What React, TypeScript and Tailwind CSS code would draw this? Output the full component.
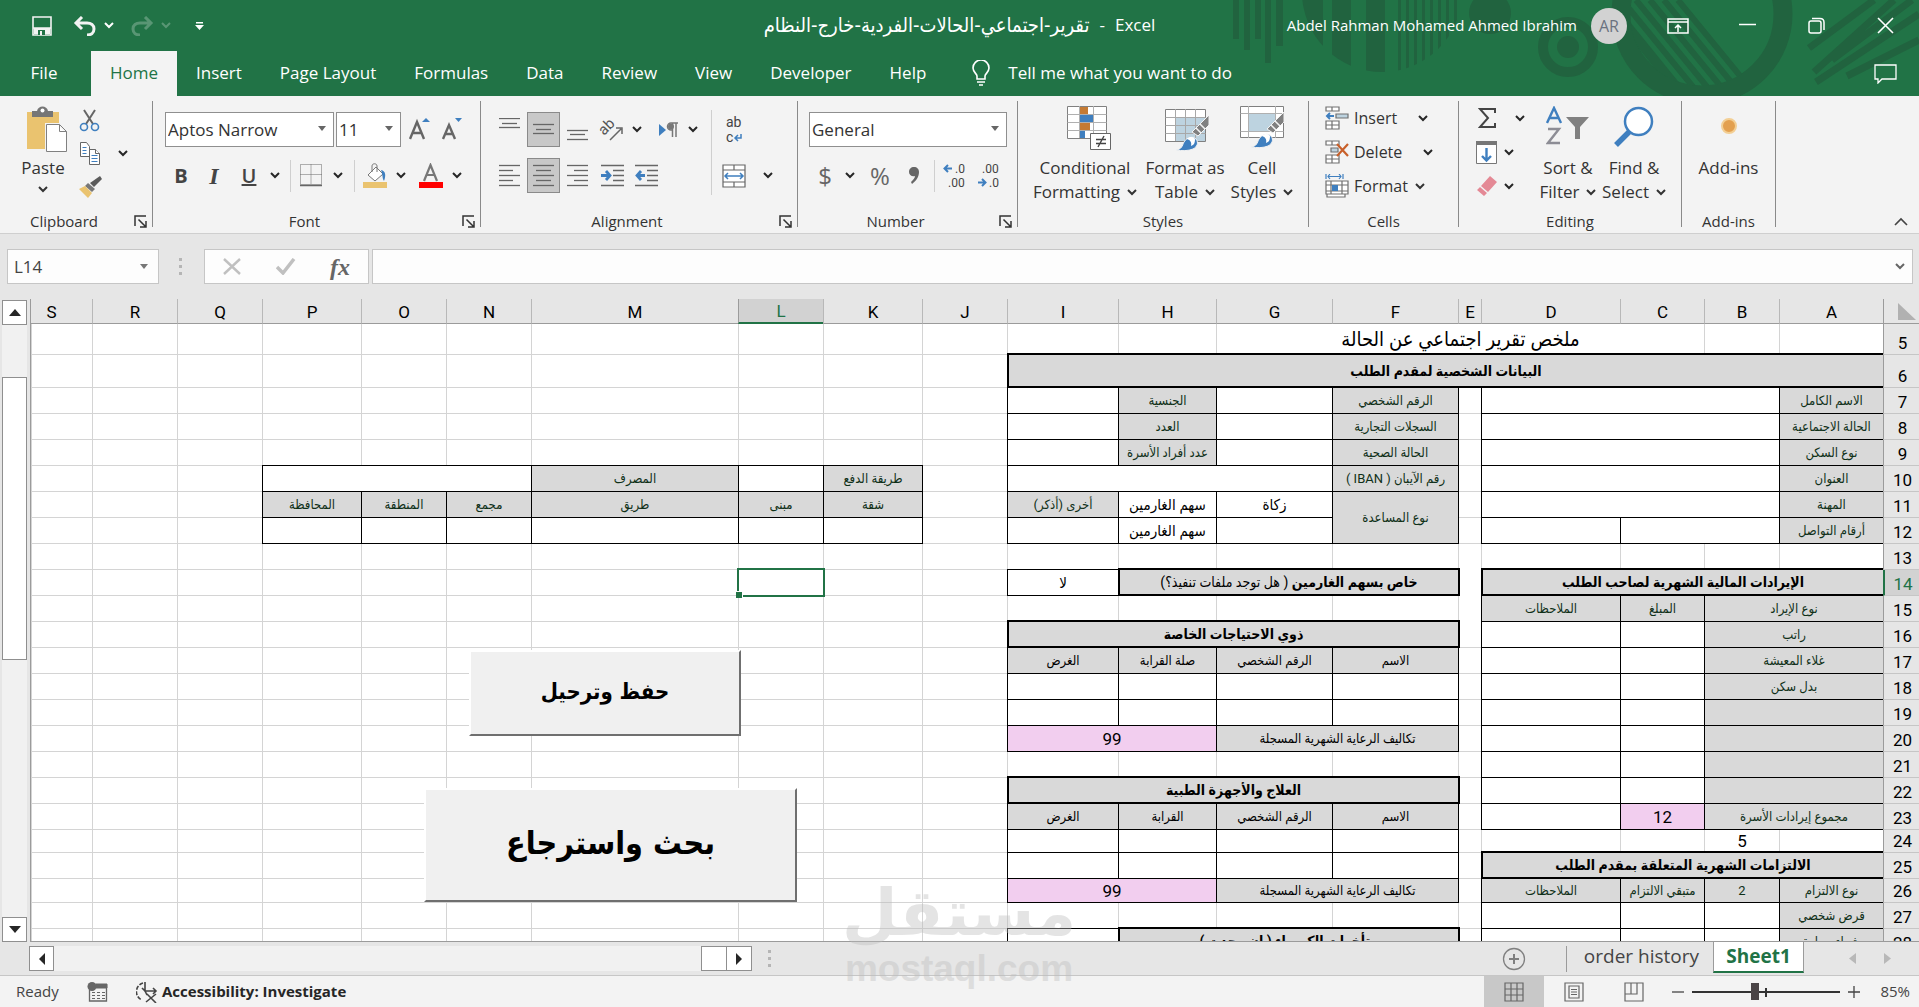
import { ReactNode } from "react";

type Kind = "grid" | "bare" | "box" | "label" | "head" | "title" | "pink" | "plain" | "caption" | "selected";

interface CellData {
    kind: Kind;
    text?: ReactNode;
    span?: number;
    rows?: number;
}

interface RowData {
    n: number;
    height: string;
    cells: CellData[];
}

const UI = "font-['Open_Sans','Noto_Sans',sans-serif]";

const BOX = "relative z-10 border-l border-b border-black shadow-[1px_0_0_#000,0_-1px_0_#000,1px_-1px_0_#000]";

const KINDS: Record<Kind, string> = {
    grid: "border-l border-b border-[#d4d4d4]",
    bare: "border-l border-[#d4d4d4]",
    plain: "border-l border-b border-[#d4d4d4] text-[17px]",
    caption: "border-l border-b border-[#d4d4d4] text-xl",
    box: BOX + " bg-white text-[15px]",
    label: BOX + " bg-[#d9d9d9] text-[#0f3018] text-[13px]",
    head: BOX + " bg-[#d9d9d9] text-black text-[13px]",
    pink: BOX + " bg-[#f2ceef] text-[17px]",
    title: "relative z-20 border-l-2 border-b-2 border-black bg-[#d9d9d9] text-sm font-bold shadow-[2px_0_0_#000,0_-2px_0_#000,2px_-2px_0_#000]",
    selected: "relative z-20 border-l border-b border-[#d4d4d4]",
};

const grid = (count: number): CellData[] => Array.from({ length: count }, () => ({ kind: "grid" as Kind }));
const boxes = (count: number): CellData[] => Array.from({ length: count }, () => ({ kind: "box" as Kind }));
const box = (text?: string, span?: number): CellData => ({ kind: "box", text, span });
const label = (text: string, span?: number, rows?: number): CellData => ({ kind: "label", text, span, rows });
const head = (text: string, span?: number): CellData => ({ kind: "head", text, span });
const title = (text: ReactNode, span: number): CellData => ({ kind: "title", text, span });
const pink = (text: string, span?: number): CellData => ({ kind: "pink", text, span });
const bare: CellData = { kind: "bare" };

const COLUMNS = [
    { name: "A", width: "w-[104px]" },
    { name: "B", width: "w-[75px]" },
    { name: "C", width: "w-[84px]" },
    { name: "D", width: "w-[139px]" },
    { name: "E", width: "w-[23px]" },
    { name: "F", width: "w-[126px]" },
    { name: "G", width: "w-[116px]" },
    { name: "H", width: "w-[98px]" },
    { name: "I", width: "w-[111px]" },
    { name: "J", width: "w-[85px]" },
    { name: "K", width: "w-[99px]" },
    { name: "L", width: "w-[85px]" },
    { name: "M", width: "w-[207px]" },
    { name: "N", width: "w-[85px]" },
    { name: "O", width: "w-[85px]" },
    { name: "P", width: "w-[99px]" },
    { name: "Q", width: "w-[85px]" },
    { name: "R", width: "w-[85px]" },
    { name: "S", width: "" },
];

const ROWS: RowData[] = [
    { n: 5, height: "h-[31px]", cells: [...grid(2), { kind: "caption", text: "ملخص تقرير اجتماعي عن الحالة", span: 5 }, ...grid(12)] },
    { n: 6, height: "h-[33px]", cells: [title("البيانات الشخصية لمقدم الطلب", 9), ...grid(10)] },
    { n: 7, height: "h-[26px]", cells: [label("الاسم الكامل"), box("", 3), ...grid(1), label("الرقم الشخصي"), box(), label("الجنسية"), box(), ...grid(10)] },
    { n: 8, height: "h-[26px]", cells: [label("الحالة الاجتماعية"), box("", 3), ...grid(1), label("السجلات التجارية"), box(), label("العدد"), box(), ...grid(10)] },
    { n: 9, height: "h-[26px]", cells: [label("نوع السكن"), box("", 3), ...grid(1), label("الحالة الصحية"), box(), label("عدد أفراد الأسرة"), box(), ...grid(10)] },
    { n: 10, height: "h-[26px]", cells: [label("العنوان"), box("", 3), ...grid(1), label("رقم الآيبان ( IBAN )"), box("", 3), ...grid(1), label("طريقة الدفع"), box(), label("المصرف"), box("", 3), ...grid(3)] },
    { n: 11, height: "h-[26px]", cells: [label("المهنة"), box("", 3), ...grid(1), label("نوع المساعدة", 1, 2), box("زكاة"), box("سهم الغارمين"), label("أخرى (أذكر)"), ...grid(1), label("شقة"), label("مبنى"), label("طريق"), label("مجمع"), label("المنطقة"), label("المحافظة"), ...grid(3)] },
    { n: 12, height: "h-[26px]", cells: [label("أرقام التواصل"), box("", 2), box(), ...grid(1), box(), box("سهم الغارمين"), box(), ...grid(1), ...boxes(6), ...grid(3)] },
    { n: 13, height: "h-[26px]", cells: [...grid(4), bare, ...grid(14)] },
    { n: 14, height: "h-[26px]", cells: [title("الإيرادات المالية الشهرية لصاحب الطلب", 4), bare, title(<>خاص بسهم الغارمين <span className="font-normal">( هل توجد ملفات تنفيذ؟)</span></>, 3), box("لا"), ...grid(2), { kind: "selected" }, ...grid(7)] },
    { n: 15, height: "h-[26px]", cells: [label("نوع الإيراد", 2), label("المبلغ"), label("الملاحظات"), bare, ...grid(14)] },
    { n: 16, height: "h-[26px]", cells: [label("راتب", 2), ...boxes(2), ...grid(1), title("ذوي الاحتياجات الخاصة", 4), ...grid(10)] },
    { n: 17, height: "h-[26px]", cells: [label("غلاء المعيشة", 2), ...boxes(2), ...grid(1), head("الاسم"), head("الرقم الشخصي"), head("صلة القرابة"), head("الغرض"), ...grid(10)] },
    { n: 18, height: "h-[26px]", cells: [label("بدل سكن", 2), ...boxes(2), ...grid(1), ...boxes(4), ...grid(10)] },
    { n: 19, height: "h-[26px]", cells: [label("", 2), ...boxes(2), ...grid(1), ...boxes(4), ...grid(10)] },
    { n: 20, height: "h-[26px]", cells: [label("", 2), ...boxes(2), ...grid(1), head("تكاليف الرعاية الشهرية المسجلة", 2), pink("99", 2), ...grid(10)] },
    { n: 21, height: "h-[26px]", cells: [label("", 2), ...boxes(2), ...grid(15)] },
    { n: 22, height: "h-[26px]", cells: [label("", 2), ...boxes(2), ...grid(1), title("العلاج والأجهزة الطبية", 4), ...grid(10)] },
    { n: 23, height: "h-[26px]", cells: [label("مجموع إيرادات الأسرة", 2), pink("12"), box(), ...grid(1), head("الاسم"), head("الرقم الشخصي"), head("القرابة"), head("الغرض"), ...grid(10)] },
    { n: 24, height: "h-[23px]", cells: [...grid(1), { kind: "plain", text: "5" }, ...grid(3), ...boxes(4), ...grid(10)] },
    { n: 25, height: "h-[26px]", cells: [title("الالتزامات الشهرية المتعلقة بمقدم الطلب", 4), ...grid(1), ...boxes(4), ...grid(10)] },
    { n: 26, height: "h-[24px]", cells: [label("نوع الالتزام"), label("2"), label("متبقي الالتزام"), label("الملاحظات"), ...grid(1), head("تكاليف الرعاية الشهرية المسجلة", 2), pink("99", 2), ...grid(10)] },
    { n: 27, height: "h-[26px]", cells: [label("قرض شخصي"), ...boxes(3), ...grid(15)] },
    { n: 28, height: "h-[26px]", cells: [label("شراء سيارة"), ...boxes(3), ...grid(1), title("متأخرات الكهرباء ( إن وجدت )", 3), box(), ...grid(10)] },
];

const TABS = ["Insert", "Page Layout", "Formulas", "Data", "Review", "View", "Developer", "Help"];

const Chevron = ({ className = "" }: { className?: string }) => (
    <svg width="10" height="7" viewBox="0 0 10 7" className={"shrink-0 " + className} fill="none" stroke="currentColor" strokeWidth="2">
        <path d="M1 1l4 4 4-4" />
    </svg>
);

const DropButton = ({ name, className = "" }: { name: string; className?: string }) => (
    <button aria-label={name} className={"flex h-6 w-4 shrink-0 items-center justify-center text-[#262626] " + className}>
        <Chevron />
    </button>
);

const IconButton = ({ name, className = "", children }: { name: string; className?: string; children: ReactNode }) => (
    <button aria-label={name} title={name} className={"flex h-[35px] shrink-0 items-center justify-center " + className}>
        {children}
    </button>
);

const Divider = ({ className = "h-8" }: { className?: string }) => (
    <div className={"w-px shrink-0 " + className} />
);

interface GroupProps {
    name: string;
    className: string;
    launcher?: boolean;
    children: ReactNode;
}

const Group = ({ name, className, launcher, children }: GroupProps) => (
    <section aria-label={name} className={"flex shrink-0 flex-col border-r border-[#8a8a8a] " + className}>
        <div className="min-h-0 flex-1">{children}</div>
        <div className="relative flex h-3 items-center justify-center text-[15px] leading-3 text-[#333]">
            <span className={launcher ? "pr-6" : ""}>{name}</span>
            {launcher && (
                <button aria-label={name + " settings"} className="absolute right-[5px] top-0">
                    <svg width="13" height="13" viewBox="0 0 13 13" fill="none" stroke="#333" strokeWidth="1.5">
                        <path d="M1 11V1h11M4.5 4.5l7 7M12 6v6H6" />
                    </svg>
                </button>
            )}
        </div>
    </section>
);

const Combo = ({ name, value, className }: { name: string; value: string; className: string }) => (
    <div className={"relative h-[35px] shrink-0 " + className}>
        <select aria-label={name} className="h-full w-full appearance-none border border-[#8f8f8f] bg-white pl-[2px] text-[17px] text-[#333]">
            <option>{value}</option>
        </select>
        <svg width="8" height="5" viewBox="0 0 8 5" className="pointer-events-none absolute right-2 top-[14px]" fill="#666">
            <path d="M0 0h8L4 5z" />
        </svg>
    </div>
);

const Lines = ({ rows }: { rows: [number, number, number][] }) => (
    <svg width="21" height="24" viewBox="0 0 21 24" stroke="#666" strokeWidth="1.3">
        {rows.map(([x1, x2, y]) => <path key={y} d={`M${x1} ${y}.5H${x2}`} />)}
    </svg>
);

const BigButton = ({ icon, lines, drop, className = "" }: { icon: ReactNode; lines: string[]; drop?: boolean; className?: string }) => (
    <button className={"flex shrink-0 flex-col items-center pt-[5px] text-[17px] leading-6 text-[#333] " + className}>
        <span className="flex h-[50px] items-start justify-center">{icon}</span>
        <span className="whitespace-nowrap">{lines[0]}</span>
        {lines[1] && (
            <span className="flex items-center gap-[7px]">
                {lines[1]}
                {drop && <Chevron />}
            </span>
        )}
    </button>
);

const Brush = () => (
    <>
        <path d="M44 6v10L33 27l-6-4z" fill="#808080" stroke="#f3f3f3" />
        <path d="M35 15l5 5M31 19l5 5" stroke="#f3f3f3" strokeWidth="1.5" />
        <path d="M11 41c6-1 6-4 8-8 3-5 9-6 12-3 3 4 1 8-3 10-5 2-11 2-17 1z" fill="#3f7fbf" stroke="#f3f3f3" />
        <path d="M22 30c3-3 7-2 8 0 0 4-1 6-4 7 1-4-1-6-4-7z" fill="#fff" />
    </>
);

const CellsIcon = ({ children }: { children: ReactNode }) => (
    <svg width="24" height="24" viewBox="0 0 24 24" fill="none" stroke="#707070" strokeWidth="1.2">{children}</svg>
);

const Doodles = () => (
    <svg className="pointer-events-none absolute right-0 top-0" width="700" height="96" viewBox="1219 0 700 96" fill="#21633f">
        <defs>
            <clipPath id="stripes"><circle cx="1382" cy="-8" r="80" /></clipPath>
            <clipPath id="ring"><circle cx="1702" cy="14" r="72" /></clipPath>
        </defs>
        <path d="M1233 0h6v39h-6zM1244 0h6v50h-6zM1255 0h6v39h-6zM1265 0h6v63h-6zM1276 0h7v46h-7z" />
        <g clipPath="url(#stripes)">
            <path d="M1302 0h21v72h-21zM1332 0h19v72h-19zM1366 0h19v72h-19zM1398 0h3v72h-3zM1406 0h3v72h-3zM1414 0h3v72h-3zM1422 0h3v72h-3zM1430 0h3v72h-3zM1438 0h3v72h-3zM1446 0h3v72h-3zM1454 0h3v72h-3z" />
        </g>
        <circle cx="1490" cy="13" r="21" />
        <circle cx="1568" cy="47" r="25" fill="none" stroke="#21633f" strokeWidth="10" />
        <circle cx="1568" cy="47" r="11" />
        <circle cx="1702" cy="14" r="81" fill="none" stroke="#21633f" strokeWidth="19" />
        <g clipPath="url(#ring)" fill="none" stroke="#21633f" strokeWidth="6">
            <path d="M1622 0l90 110M1636 0l90 110M1650 0l90 110M1664 0l90 110M1678 0l90 110" />
            <path d="M1622 20l60 74" strokeWidth="10" />
        </g>
        <path d="M1874 0l-65 48M1894 0l-80 72M1912 0l-80 60M1919 14l-103 68M1919 40l-72 36" fill="none" stroke="#21633f" strokeWidth="7" />
    </svg>
);

const TitleBar = () => (
    <div className="relative flex h-[51px] items-center text-white">
        <button aria-label="Save" className="ml-8">
            <svg width="20" height="20" viewBox="0 0 20 20" fill="none" stroke="#f3f3f3" strokeWidth="1.6">
                <path d="M1 1h18v18H1zM1 12h18" />
                <path d="M2 12h16v6H2z" fill="#f3f3f3" stroke="none" />
                <path d="M6 14h7v5H6z" fill="#217346" stroke="none" />
                <path d="M8 15h2v4H8z" fill="#f3f3f3" stroke="none" />
            </svg>
        </button>
        <button aria-label="Undo" className="ml-[21px]">
            <svg width="24" height="20" viewBox="0 0 24 20" fill="none" stroke="#f3f3f3" strokeWidth="3">
                <path d="M9 1L3 7l6 6M3 7h11c4 0 7 2 7 6s-3 6-7 6" />
            </svg>
        </button>
        <button aria-label="Undo history" className="ml-[7px]"><Chevron /></button>
        <button aria-label="Redo" className="ml-4 opacity-25">
            <svg width="24" height="20" viewBox="0 0 24 20" fill="none" stroke="#fff" strokeWidth="3">
                <path d="M15 1l6 6-6 6M21 7H10c-4 0-7 2-7 6s3 6 7 6" />
            </svg>
        </button>
        <button aria-label="Redo history" className="ml-[7px] opacity-25"><Chevron /></button>
        <button aria-label="Customize Quick Access Toolbar" className="ml-6">
            <svg width="9" height="8" viewBox="0 0 9 8" fill="#fff"><path d="M1 0h7v1.5H1zM0 3h9L4.5 8z" /></svg>
        </button>
        <h1 className="absolute inset-x-0 top-[13px] flex justify-center gap-[10px] text-[17px] leading-6">
            <span dir="rtl" className="font-['DejaVu_Sans_Condensed','DejaVu_Sans',sans-serif] text-xl leading-6">تقرير-اجتماعي-الحالات-الفردية-خارج-النظام</span>
            <span>-</span>
            <span>Excel</span>
        </h1>
        <div className="relative ml-auto flex items-center">
            <span className="mr-[14px] text-[15px]">Abdel Rahman Mohamed Ahmed Ibrahim</span>
            <button className="mr-10 flex size-9 items-center justify-center rounded-full bg-[#d2d2d2] text-base text-[#6b7280]">AR</button>
            <button aria-label="Ribbon display options" className="mr-[50px]">
                <svg width="22" height="16" viewBox="0 0 22 16" fill="none" stroke="#fff" strokeWidth="1.5"><path d="M1 1h20v14H1zM1 4h20M11 14V7M8 10l3-3 3 3" /></svg>
            </button>
            <button aria-label="Minimize" className="mr-[52px]">
                <svg width="17" height="16" viewBox="0 0 17 16" stroke="#fff" strokeWidth="1.5"><path d="M0 6.5h17" /></svg>
            </button>
            <button aria-label="Restore" className="mr-[52px]">
                <svg width="17" height="17" viewBox="0 0 17 17" fill="none" stroke="#fff" strokeWidth="1.5"><rect x="1" y="4" width="12" height="12" rx="2" /><path d="M4 1.5h8c2 0 4 1 4 4V13" /></svg>
            </button>
            <button aria-label="Close" className="mr-[25px]">
                <svg width="17" height="17" viewBox="0 0 17 17" stroke="#fff" strokeWidth="1.6"><path d="M1 1l15 15M16 1L1 16" /></svg>
            </button>
        </div>
    </div>
);

const TabBar = () => (
    <nav className="relative flex h-[45px] items-stretch text-[17px] text-white">
        <button className="w-[91px] pb-[2px] pr-[3px]">File</button>
        <button className="w-[86px] bg-[#f3f3f3] pb-[2px] text-[#217346]">Home</button>
        {TABS.map(tab => <button key={tab} className="whitespace-nowrap px-[19px] pb-[2px]">{tab}</button>)}
        <button className="ml-[27px] flex items-center gap-[18px] whitespace-nowrap pb-[2px]">
            <svg width="18" height="26" viewBox="0 0 18 26" fill="none" stroke="#fff" strokeWidth="1.6">
                <path d="M5 19v-3c0-2-4-4-4-8a8 8 0 0116 0c0 4-4 6-4 8v3zM5 22h8M7 25h4" />
            </svg>
            Tell me what you want to do
        </button>
        <button aria-label="Comments" className="ml-auto mr-[22px]">
            <svg width="23" height="20" viewBox="0 0 23 20" fill="none" stroke="#fff" strokeWidth="1.3"><path d="M1 1h21v14H8l-4 4v-4H1z" /></svg>
        </button>
    </nav>
);

const ClipboardGroup = () => (
    <Group name="Clipboard" className="w-[153px]" launcher>
        <div className="flex">
            <button className="ml-[18px] flex w-[50px] flex-col items-center text-[17px] leading-6 text-[#333]">
                <svg width="42" height="46" viewBox="0 0 42 46" className="ml-2 mt-[5px] shrink-0">
                    <path d="M1 6h32v37H1z" fill="#eac36f" />
                    <path d="M6 5h5c1-6 10-6 11 0h5v6H6z" fill="#767676" />
                    <circle cx="16.5" cy="4.5" r="2" fill="#fff" />
                    <path d="M20.5 18.5h13l7 7v20h-20z" fill="#fff" stroke="#f3f3f3" strokeWidth="3" />
                    <path d="M20.5 18.5h13l7 7v20h-20zM33.5 18.5v7h7" fill="#fff" stroke="#808080" />
                </svg>
                <span className="mt-1">Paste</span>
                <Chevron className="mt-[6px]" />
            </button>
            <div className="flex flex-col pl-[11px]">
                <button aria-label="Cut" className="h-9 pt-[2px]">
                    <svg width="22" height="23" viewBox="0 0 22 23" fill="none" strokeWidth="2">
                        <path d="M5 1l9 14M16 1L7 15" stroke="#666" />
                        <circle cx="5" cy="18" r="3.5" stroke="#3f7fbf" strokeWidth="1.6" />
                        <circle cx="16" cy="18" r="3.5" stroke="#3f7fbf" strokeWidth="1.6" />
                    </svg>
                </button>
                <div className="flex h-8 items-center">
                    <button aria-label="Copy">
                        <svg width="22" height="23" viewBox="0 0 22 23" fill="#fff" stroke="#666">
                            <path d="M1.5.5h6l3 4v10h-9z" />
                            <path d="M3.5 5.5h4M3.5 8.5h4M3.5 11.5h4" stroke="#3f7fbf" />
                            <path d="M10.5 7.5h6l4 4v11h-10z" />
                            <path d="M16.5 7.5v4h4" />
                            <path d="M12.5 13.5h6M12.5 16.5h6M12.5 19.5h6" stroke="#3f7fbf" />
                        </svg>
                    </button>
                    <DropButton name="Copy options" className="ml-[14px]" />
                </div>
                <button aria-label="Format Painter" className="h-8 pt-1">
                    <svg width="24" height="22" viewBox="0 0 24 22">
                        <path d="M21 0l2 3-8 8-4-4z" fill="#5b5b5b" />
                        <path d="M9 7l7 6-3 3-7-6z" fill="#777" />
                        <path d="M6 10l7 7-4 5-9-9z" fill="#eac36f" />
                    </svg>
                </button>
            </div>
        </div>
    </Group>
);

const FontGroup = () => (
    <Group name="Font" className="w-[328px]" launcher>
        <div className="flex items-center gap-[2px] pl-3 pt-[11px]">
            <Combo name="Font" value="Aptos Narrow" className="w-[169px]" />
            <Combo name="Font size" value="11" className="w-[65px]" />
            <IconButton name="Increase font size" className="ml-[5px] w-6">
                <svg width="22" height="26" viewBox="0 0 22 26"><path d="M1 22L8 5l7 17M3.5 16h9" fill="none" stroke="#666" strokeWidth="2.4" /><path d="M13 5l4-4 4 4z" fill="#3f7fbf" /></svg>
            </IconButton>
            <IconButton name="Decrease font size" className="ml-[6px] w-6">
                <svg width="22" height="26" viewBox="0 0 22 26"><path d="M2 22L8 8l6 14M4 17h8" fill="none" stroke="#666" strokeWidth="2.4" /><path d="M14 1h7l-3.5 4z" fill="#3f7fbf" /></svg>
            </IconButton>
        </div>
        <div className="flex items-center pl-3 pt-[11px] text-xl text-[#444]">
            <IconButton name="Bold" className="w-8 font-bold">B</IconButton>
            <IconButton name="Italic" className="w-[34px] font-['Liberation_Serif',serif] text-2xl font-bold italic">I</IconButton>
            <IconButton name="Underline" className="w-9 font-semibold underline">U</IconButton>
            <DropButton name="Underline style" />
            <Divider className="ml-[7px] h-8 bg-[#cfcfcf]" />
            <IconButton name="Borders" className="ml-2 w-[24px]">
                <svg width="22" height="23" viewBox="0 0 22 23" fill="none" stroke="#666"><path d="M.5.5h21v20H.5zM11 .5v20M.5 10.5h21" strokeDasharray="1 1" /><path d="M0 21.5h22" strokeWidth="1.5" /></svg>
            </IconButton>
            <DropButton name="Border style" className="ml-[7px]" />
            <Divider className="ml-2 h-8 bg-[#cfcfcf]" />
            <IconButton name="Fill Color" className="ml-2 w-6">
                <svg width="24" height="26" viewBox="0 0 24 26"><path d="M0 19h24v6H0z" fill="#eac36f" /><path d="M5 12L13 4l7 7-8 7z" fill="#fff" stroke="#777" /><path d="M9 9V3c0-3 5-3 5 0v6" fill="none" stroke="#777" /><path d="M18 7c5 1 5 6 3 11-2-3-1-6-3-11z" fill="#3f7fbf" /></svg>
            </IconButton>
            <DropButton name="Fill options" className="ml-[6px]" />
            <IconButton name="Font Color" className="ml-[10px] w-6">
                <svg width="24" height="26" viewBox="0 0 24 26"><path d="M0 19h24v6H0z" fill="#f00" /><path d="M5 18l6.5-16L18 18M7.5 12h8" fill="none" stroke="#777" strokeWidth="2.2" /></svg>
            </IconButton>
            <DropButton name="Font color options" className="ml-[6px]" />
        </div>
    </Group>
);

const AlignmentGroup = () => (
    <Group name="Alignment" className="w-[317px]" launcher>
        <div className="flex">
            <div>
                <div className="flex items-center pl-[17px] pt-[11px]">
                    <IconButton name="Top Align" className="w-[23px]"><Lines rows={[[0, 21, 0], [3, 18, 5], [0, 21, 9]]} /></IconButton>
                    <IconButton name="Middle Align" className="ml-[6px] w-[33px] border border-[#8a8a8a] bg-[#c8c8c8]"><Lines rows={[[0, 21, 6], [3, 18, 11], [0, 21, 15]]} /></IconButton>
                    <IconButton name="Bottom Align" className="ml-[6px] w-[23px]"><Lines rows={[[0, 21, 12], [3, 18, 16], [0, 21, 21]]} /></IconButton>
                    <IconButton name="Orientation" className="ml-3 w-6">
                        <svg width="24" height="24" viewBox="0 0 24 24" className="overflow-visible" fill="none" stroke="#666" strokeWidth="1.5">
                            <path d="M9 22L20 11M15 10h6v6" />
                            <text x="3" y="18" transform="rotate(-45 3 18)" fontSize="15" fill="#555" stroke="none" className="font-['Roboto',sans-serif]">ab</text>
                        </svg>
                    </IconButton>
                    <DropButton name="Orientation options" className="ml-1" />
                    <IconButton name="Text Direction" className="ml-3 w-6">
                        <svg width="20" height="16" viewBox="0 0 20 16"><path d="M0 2l7 6-7 6z" fill="#3f7fbf" /><path d="M19 1h-7a3.5 3.5 0 000 7h1M13.5 1v14M17 1v14" fill="none" stroke="#777" strokeWidth="1.5" /><circle cx="12" cy="4.5" r="3" fill="#777" /></svg>
                    </IconButton>
                    <DropButton name="Text direction options" className="ml-1" />
                </div>
                <div className="flex items-center pl-[17px] pt-[11px]">
                    <IconButton name="Align Left" className="w-[23px]"><Lines rows={[[0, 21, 1], [0, 14, 6], [0, 21, 11], [0, 14, 16], [0, 21, 21]]} /></IconButton>
                    <IconButton name="Center" className="ml-[6px] w-[33px] border border-[#8a8a8a] bg-[#c8c8c8]"><Lines rows={[[0, 21, 1], [3, 18, 6], [0, 21, 11], [3, 18, 16], [0, 21, 21]]} /></IconButton>
                    <IconButton name="Align Right" className="ml-[6px] w-[23px]"><Lines rows={[[0, 21, 1], [7, 21, 6], [0, 21, 11], [7, 21, 16], [0, 21, 21]]} /></IconButton>
                    <IconButton name="Decrease Indent" className="ml-[11px] w-6">
                        <svg width="23" height="24" viewBox="0 0 23 24" fill="none" stroke="#666" strokeWidth="1.3"><path d="M0 1.5h23M12 6.5h11M12 11.5h11M12 16.5h11M0 21.5h23" /><path d="M0 11.5h8M5 7l4 4.5L5 16" stroke="#3f7fbf" strokeWidth="2.8" /></svg>
                    </IconButton>
                    <IconButton name="Increase Indent" className="ml-[10px] w-6">
                        <svg width="23" height="24" viewBox="0 0 23 24" fill="none" stroke="#666" strokeWidth="1.3"><path d="M0 1.5h23M12 6.5h11M12 11.5h11M12 16.5h11M0 21.5h23" /><path d="M2 11.5h8M6 7l-4 4.5L6 16" stroke="#3f7fbf" strokeWidth="2.8" /></svg>
                    </IconButton>
                </div>
            </div>
            <Divider className="ml-auto mt-[9px] h-[85px] bg-[#cfcfcf]" />
            <div className="w-[85px] pl-[10px] pt-[11px]">
                <IconButton name="Wrap Text" className="w-6">
                    <svg width="20" height="32" viewBox="0 0 20 32" fontSize="14" fill="#444" className="overflow-visible font-['Roboto',sans-serif]"><text x="2" y="13">ab</text><text x="2" y="28">c</text><path d="M17 20v4h-6M14 21l-3 3 3 3" fill="none" stroke="#3f7fbf" strokeWidth="1.5" /></svg>
                </IconButton>
                <div className="flex items-center pt-[11px]">
                    <IconButton name="Merge and Center" className="w-6">
                        <svg width="24" height="24" viewBox="0 0 24 24" fill="#fff" stroke="#666" strokeWidth="1.2"><path d="M1 1h22v22H1zM1 6h22M1 18h22M12 1v5M12 18v5" /><path d="M3 12h18M6 9l-3 3 3 3M18 9l3 3-3 3" fill="none" stroke="#3f7fbf" strokeWidth="1.5" /></svg>
                    </IconButton>
                    <DropButton name="Merge options" className="ml-[14px]" />
                </div>
            </div>
        </div>
    </Group>
);

const NumberGroup = () => (
    <Group name="Number" className="w-[220px]" launcher>
        <div className="pl-[11px] pt-[11px]">
            <Combo name="Number format" value="General" className="w-[198px]" />
        </div>
        <div className="flex items-center pl-[18px] pt-[11px] text-2xl text-[#666]">
            <IconButton name="Accounting format" className="w-[18px]">$</IconButton>
            <DropButton name="Currency" className="ml-2" />
            <IconButton name="Percent" className="ml-[10px] w-6 text-2xl">%</IconButton>
            <IconButton name="Comma" className="ml-[10px] w-6">
                <svg width="10" height="17" viewBox="0 0 10 17" fill="#666"><path d="M5 0c3 0 5 2 5 5 0 5-3 9-7 12l-1-2c2-2 4-4 4-6C3 10 0 8 0 5s2-5 5-5z" /></svg>
            </IconButton>
            <Divider className="ml-2 h-8 bg-[#cfcfcf]" />
            <IconButton name="Increase Decimal" className="ml-2 w-6">
                <svg width="24" height="28" viewBox="0 0 24 28" fontSize="12" fill="#444" className="overflow-visible font-['Roboto',sans-serif]"><text x="12" y="11">.0</text><text x="5" y="25">.00</text><path d="M9 6.5H2M5 3L1.500 6.5 5 10" fill="none" stroke="#3f7fbf" strokeWidth="2" /></svg>
            </IconButton>
            <IconButton name="Decrease Decimal" className="ml-[10px] w-6">
                <svg width="24" height="28" viewBox="0 0 24 28" fontSize="12" fill="#444" className="overflow-visible font-['Roboto',sans-serif]"><text x="5" y="11">.00</text><text x="12" y="25">.0</text><path d="M1 20.5h7M5 17l3.5 3.5L5 24" fill="none" stroke="#3f7fbf" strokeWidth="2" /></svg>
            </IconButton>
        </div>
    </Group>
);

const StylesGroup = () => (
    <Group name="Styles" className="w-[291px]">
        <div className="flex">
            <BigButton
                className="ml-[11px] w-[112px]"
                lines={["Conditional", "Formatting"]}
                drop
                icon={
                    <svg width="44" height="46" viewBox="0 0 44 46" className="ml-2">
                        <path d="M.5.5h39v32H.5z" fill="#fff" stroke="#808080" />
                        <path d="M.5 8.5h39M.5 16.5h39M.5 24.5h39M12.5 0v32M26.5 0v32" stroke="#b0b0b0" />
                        <path d="M13 1h8v7h-8zM13 17h10v7H13z" fill="#c47a33" />
                        <path d="M13 9h13v7H13zM13 25h5v7h-5z" fill="#3f7fbf" />
                        <path d="M23.5 27.5h20v16h-20z" fill="#fff" stroke="#666" />
                        <path d="M29 33.5h10M29 37.5h10M37 30l-6 11" stroke="#444" strokeWidth="1.4" />
                    </svg>
                }
            />
            <BigButton
                className="w-[88px]"
                lines={["Format as", "Table"]}
                drop
                icon={
                    <svg width="44" height="46" viewBox="0 0 44 46" className="ml-1 mt-[3px]">
                        <path d="M.5.5h40v32H.5z" fill="#fff" stroke="#808080" />
                        <path d="M10 8h30v24H10z" fill="#bdd3e0" />
                        <path d="M.5 8.5h40M.5 16.5h40M.5 24.5h40M10.5 0v32M20.5 0v32M30.5 0v32" stroke="#a8a8a8" />
                        <Brush />
                    </svg>
                }
            />
            <BigButton
                className="w-[66px]"
                lines={["Cell", "Styles"]}
                drop
                icon={
                    <svg width="44" height="46" viewBox="0 0 44 46">
                        <path d="M.5.5h43v31H.5z" fill="#fff" stroke="#808080" />
                        <path d="M.5 7.5h43M.5 25.5h43M8.5 0v32M35.5 0v32" stroke="#b0b0b0" />
                        <path d="M9 8h26v17H9z" fill="#bdd3e0" />
                        <Brush />
                    </svg>
                }
            />
        </div>
    </Group>
);

const CellsGroup = () => (
    <Group name="Cells" className="w-[150px]">
        <div className="flex flex-col text-base text-[#333]">
            <div className="flex h-[34px] items-center pl-4">
                <button className="flex items-center gap-[5px]">
                    <CellsIcon>
                        <path d="M1 1h13v4H1zM7 1v4M1 15h13v8H1zM1 19h13M7 15v8" fill="#fff" />
                        <path d="M11 8h12v4H11z" fill="#bdd3e0" />
                        <path d="M9 10H2M5 7l-3 3 3 3" stroke="#3f7fbf" strokeWidth="2" />
                    </CellsIcon>
                    Insert
                </button>
                <DropButton name="Insert options" className="ml-[18px]" />
            </div>
            <div className="flex h-[34px] items-center pl-4">
                <button className="flex items-center gap-[5px]">
                    <CellsIcon>
                        <path d="M1 1h13v4H1zM7 1v4M1 15h13v8H1zM1 19h13M7 15v8" fill="#fff" />
                        <path d="M6 8h7v4H6z" fill="#bdd3e0" />
                        <path d="M12 4l11 12M23 4L12 16" stroke="#c8602a" strokeWidth="2.2" />
                    </CellsIcon>
                    Delete
                </button>
                <DropButton name="Delete options" className="ml-[18px]" />
            </div>
            <div className="flex h-[34px] items-center pl-4">
                <button className="flex items-center gap-[5px]">
                    <CellsIcon>
                        <path d="M1 7h22v13H1zM1 11h22M1 17h22M6 7v13M17 7v13M2 20v3h18v-3" fill="#fff" />
                        <path d="M7 11h6v6H7z" fill="#3f7fbf" stroke="none" />
                        <path d="M1 0v5M18 0v5M3 2.5h13M5 0L3 2.5 5 5M14 0l2 2.5L14 5" stroke="#3f7fbf" />
                    </CellsIcon>
                    Format
                    <Chevron className="ml-[2px]" />
                </button>
            </div>
        </div>
    </Group>
);

const EditingGroup = () => (
    <Group name="Editing" className="w-[223px]">
        <div className="flex">
            <div className="flex w-[73px] flex-col pl-4">
                <div className="flex h-[34px] items-center">
                    <IconButton name="AutoSum" className="w-[23px]">
                        <svg width="18" height="20" viewBox="0 0 18 20" fill="none" stroke="#444" strokeWidth="2"><path d="M17 5V1H2l8 9-8 9h15v-4" /></svg>
                    </IconButton>
                    <DropButton name="AutoSum options" className="ml-[14px]" />
                </div>
                <div className="flex h-[34px] items-center">
                    <IconButton name="Fill" className="w-[23px]">
                        <svg width="21" height="23" viewBox="0 0 21 23" fill="#fff" stroke="#777"><path d="M.5.5h20v22H.5z" /><path d="M0 0h21v4H0z" fill="#777" stroke="none" /><path d="M10.5 7v12M6 15l4.5 4.5L15 15" fill="none" stroke="#3f7fbf" strokeWidth="2.4" /></svg>
                    </IconButton>
                    <DropButton name="Fill options" className="ml-[3px]" />
                </div>
                <div className="flex h-[34px] items-center">
                    <IconButton name="Clear" className="w-[23px]">
                        <svg width="21" height="20" viewBox="0 0 21 20" fill="#e48995"><path d="M14 0l7 6-9 10-7-6zM4 11l7 6-3 3-7-6z" /></svg>
                    </IconButton>
                    <DropButton name="Clear options" className="ml-[3px]" />
                </div>
            </div>
            <BigButton
                className="w-[72px]"
                lines={["Sort &", "Filter"]}
                drop
                icon={
                    <svg width="44" height="40" viewBox="0 0 44 40" fill="none" strokeWidth="2.4">
                        <path d="M1 17L8 2l7 15M4 12h8" stroke="#3f7fbf" />
                        <path d="M2 23h11L2 37h12" stroke="#8d8d95" />
                        <path d="M20 11h23l-9 10v12h-5V21z" fill="#808080" />
                    </svg>
                }
            />
            <BigButton
                className="w-[60px]"
                lines={["Find &", "Select"]}
                drop
                icon={
                    <svg width="42" height="42" viewBox="0 0 42 42" fill="#fff" stroke="#3f7fbf">
                        <path d="M16 26L3 39" strokeWidth="5.5" />
                        <circle cx="25.5" cy="15.5" r="13.5" strokeWidth="2.5" />
                    </svg>
                }
            />
        </div>
    </Group>
);

const Ribbon = () => (
    <div className="flex h-[138px] border-b border-[#cfcfcf] bg-[#f3f3f3] pb-[6px] pt-[5px]">
        <ClipboardGroup />
        <FontGroup />
        <AlignmentGroup />
        <NumberGroup />
        <StylesGroup />
        <CellsGroup />
        <EditingGroup />
        <Group name="Add-ins" className="w-[94px]">
            <BigButton
                className="w-full"
                lines={["Add-ins"]}
                icon={<span className="mt-3 size-4 rounded-full border-2 border-[#f3cf94] bg-[#e3a04f]" />}
            />
        </Group>
        <button aria-label="Collapse the Ribbon" className="ml-auto mr-[11px] self-end">
            <svg width="14" height="10" viewBox="0 0 14 10" fill="none" stroke="#444" strokeWidth="1.6"><path d="M1 8l6-6 6 6" /></svg>
        </button>
    </div>
);

const Dots = ({ className = "" }: { className?: string }) => (
    <div className={"flex flex-col gap-1 " + className}>
        <span className="size-[3px] bg-[#b5b5b5]" />
        <span className="size-[3px] bg-[#b5b5b5]" />
        <span className="size-[3px] bg-[#b5b5b5]" />
    </div>
);

const FormulaBar = () => (
    <div className="flex h-[65px] items-center pl-[7px] pr-[6px]">
        <div className="flex h-[35px] w-[152px] shrink-0 items-center border border-[#c6c6c6] bg-[#fdfdfd] pr-[10px]">
            <input aria-label="Name Box" defaultValue="L14" className="min-w-0 flex-1 bg-transparent pl-[6px] text-[17px] text-[#444] outline-none" />
            <button aria-label="Names">
                <svg width="8" height="5" viewBox="0 0 8 5" fill="#777"><path d="M0 0h8L4 5z" /></svg>
            </button>
        </div>
        <Dots className="ml-5 mr-[22px]" />
        <div className="flex h-[35px] w-[165px] shrink-0 items-center justify-between border border-[#c6c6c6] bg-[#fdfdfd] px-[18px]">
            <button aria-label="Cancel">
                <svg width="18" height="17" viewBox="0 0 18 17" stroke="#c0c0c0" strokeWidth="2.4"><path d="M1 1l16 15M17 1L1 16" /></svg>
            </button>
            <button aria-label="Enter">
                <svg width="20" height="17" viewBox="0 0 20 17" fill="none" stroke="#c0c0c0" strokeWidth="3.5"><path d="M1 9l6 6L18 1" /></svg>
            </button>
            <button aria-label="Insert Function" className="font-['Liberation_Serif',serif] text-2xl font-bold italic leading-6 text-[#666]">fx</button>
        </div>
        <div className="ml-[3px] flex h-[35px] flex-1 items-center border border-[#c6c6c6] bg-[#fdfdfd] pr-[7px]">
            <input aria-label="Formula" className="h-full flex-1 bg-transparent px-2 text-base outline-none" />
            <button aria-label="Expand Formula Bar" className="text-[#666]"><Chevron /></button>
        </div>
    </div>
);

const VerticalScroll = () => (
    <div className="flex w-[30px] shrink-0 flex-col px-[2px] pt-[1px]">
        <button aria-label="Scroll up" className="flex h-[25px] w-[25px] items-center justify-center border border-[#8f8f8f] bg-white">
            <svg width="12" height="7" viewBox="0 0 12 7" fill="#262626"><path d="M0 7h12L6 0z" /></svg>
        </button>
        <div className="w-[25px] flex-1 bg-[#f1f1f1] pt-[52px]">
            <div className="h-[283px] border border-[#8f8f8f] bg-white" />
        </div>
        <button aria-label="Scroll down" className="flex h-[25px] w-[25px] items-center justify-center border border-[#8f8f8f] bg-white">
            <svg width="12" height="7" viewBox="0 0 12 7" fill="#262626"><path d="M0 0h12L6 7z" /></svg>
        </button>
    </div>
);

const GridCell = ({ cell }: { cell: CellData }) => (
    <td
        colSpan={cell.span}
        rowSpan={cell.rows}
        className={"whitespace-nowrap p-0 text-center align-middle leading-5 " + KINDS[cell.kind]}
    >
        {cell.text}
        {cell.kind == "selected" && (
            <span className="absolute -inset-[2px] border-2 border-[#217346]">
                <span className="absolute -bottom-[3px] -left-[3px] size-[7px] border-r border-t border-white bg-[#217346]" />
            </span>
        )}
    </td>
);

const Sheet = () => (
    <div className="relative min-w-0 flex-1 overflow-hidden border-b border-l border-[#9b9b9b]">
        <table dir="rtl" className="w-full table-fixed border-separate border-spacing-0 bg-white font-['Roboto','DejaVu_Sans_Condensed','DejaVu_Sans',sans-serif] text-black">
            <colgroup>
                <col className="w-[36px]" />
                {COLUMNS.map(column => <col key={column.name} className={column.width} />)}
            </colgroup>
            <thead>
                <tr className="h-[25px] bg-[#e6e6e6] text-[17px] leading-5">
                    <th className="border-b border-l border-[#9b9b9b] p-0">
                        <svg width="18" height="17" viewBox="0 0 18 17" className="mr-auto ml-[14px]" fill="#b1b1b1"><path d="M0 0v17h18z" /></svg>
                    </th>
                    {COLUMNS.map(({ name }) => (
                        <th
                            key={name}
                            className={"p-0 pt-px font-normal " + (name == "L"
                                ? "border-b-2 border-l border-b-[#217346] border-l-[#9b9b9b] bg-[#d2d2d2] text-[#217346]"
                                : name == "S"
                                    ? "border-b border-b-[#9b9b9b] pr-5"
                                    : "border-b border-l border-b-[#9b9b9b] border-l-[#b8b8b8]")}
                        >
                            {name}
                        </th>
                    ))}
                </tr>
            </thead>
            <tbody>
                {ROWS.map(row => (
                    <tr key={row.n} className={row.height}>
                        <th className={"relative z-30 border-b border-b-[#c6c6c6] p-0 pb-px pl-[2px] align-bottom text-[17px] font-normal leading-5 " + (row.n == 14
                            ? "border-l-2 border-l-[#217346] bg-[#d2d2d2] text-[#217346]"
                            : "border-l border-l-[#9b9b9b] bg-[#e6e6e6]")}
                        >
                            {row.n}
                        </th>
                        {row.cells.map((cell, i) => <GridCell key={i} cell={cell} />)}
                    </tr>
                ))}
            </tbody>
        </table>
        {/* form controls float over the sheet */}
        <button dir="rtl" className="absolute right-[1178px] top-[351px] z-30 h-[86px] w-[272px] border-2 border-b-[#6f6f6f] border-l-white border-r-[#6f6f6f] border-t-white bg-[#f0f0f0] pb-1 font-['DejaVu_Sans_Condensed',sans-serif] text-[22px] font-bold text-black">
            حفظ وترحيل
        </button>
        <button dir="rtl" className="absolute right-[1122px] top-[489px] z-30 h-[114px] w-[373px] border-2 border-b-[#6f6f6f] border-l-white border-r-[#6f6f6f] border-t-white bg-[#f0f0f0] pb-1 font-['DejaVu_Sans_Condensed',sans-serif] text-[32px] font-bold text-black">
            بحث واسترجاع
        </button>
    </div>
);

const SheetBar = () => (
    <div className="flex h-[33px] items-center text-[19px] text-[#444]">
        <div className="ml-[29px] flex h-[25px] w-[723px] bg-[#f1f1f1]">
            <button aria-label="Scroll left" className="flex w-[25px] items-center justify-center border border-[#8f8f8f] bg-white">
                <svg width="6" height="12" viewBox="0 0 6 12" fill="#262626"><path d="M6 0v12L0 6z" /></svg>
            </button>
            <div className="ml-auto w-[26px] border border-[#8f8f8f] bg-white" />
            <button aria-label="Scroll right" className="flex w-[25px] items-center justify-center border border-l-0 border-[#8f8f8f] bg-white">
                <svg width="6" height="12" viewBox="0 0 6 12" fill="#262626"><path d="M0 0v12l6-6z" /></svg>
            </button>
        </div>
        <Dots className="ml-4" />
        <button aria-label="New sheet" className="ml-auto mr-10">
            <svg width="24" height="24" viewBox="0 0 24 24" fill="none" stroke="#808080"><circle cx="12" cy="12" r="10.5" strokeWidth="1.3" /><path d="M12 7v10M7 12h10" strokeWidth="2" /></svg>
        </button>
        <Divider className="mr-[17px] h-[26px] bg-[#9b9b9b]" />
        <button className="pb-[5px]">order history</button>
        <button className="-mt-[3px] ml-[14px] h-[32px] w-[91px] border-b-2 border-l border-r border-[#9b9b9b] border-b-[#217346] bg-white font-bold text-[#217346]">Sheet1</button>
        <button aria-label="Previous sheet" className="ml-[45px]">
            <svg width="7" height="11" viewBox="0 0 7 11" fill="#b8b8b8"><path d="M7 0v11L0 5.5z" /></svg>
        </button>
        <button aria-label="Next sheet" className="mx-[28px]">
            <svg width="7" height="11" viewBox="0 0 7 11" fill="#b8b8b8"><path d="M0 0v11l7-5.5z" /></svg>
        </button>
    </div>
);

const StatusBar = () => (
    <footer className="flex h-8 items-center border-t border-[#c6c6c6] bg-[#f3f3f3] text-[15px] text-[#444]">
        <span className="w-[87px] pl-4">Ready</span>
        <button aria-label="Record Macro">
            <svg width="21" height="20" viewBox="0 0 21 20" fill="none" stroke="#666"><path d="M2.5 8v11h17V4H10" strokeWidth="1.3" /><path d="M9 2h11v4H9z" fill="#666" /><circle cx="5" cy="4.5" r="4.5" fill="#666" stroke="none" /><path d="M5 10.5h13M5 13.5h13M5 16.5h13" strokeDasharray="3 2" /></svg>
        </button>
        <button className="ml-7 flex items-center gap-1 font-bold text-[#262626]">
            <svg width="22" height="22" viewBox="0 0 22 22" fill="none" stroke="#444" strokeWidth="1.6"><path d="M7 2a9 9 0 00-1 17" strokeDasharray="4 1.5" /><path d="M9 1v9h10M17 7l3 3-3 3M6 7l3 3 2 4M11 13l9 9M20 13l-10 8" /></svg>
            Accessibility: Investigate
        </button>
        <button aria-label="Normal" className="ml-auto flex h-full w-[60px] items-center justify-center bg-[#c8c8c8]">
            <svg width="20" height="20" viewBox="0 0 20 20" fill="none" stroke="#666" strokeWidth="1.2"><path d="M1 1h18v18H1zM7 1v18M13 1v18M1 7h18M1 13h18" /></svg>
        </button>
        <button aria-label="Page Layout" className="flex w-[60px] justify-center">
            <svg width="20" height="20" viewBox="0 0 20 20" fill="none" stroke="#666" strokeWidth="1.2"><path d="M1 1h18v18H1zM5 4h10v12H5zM7 7.5h6M7 10h6M7 12.5h6" /></svg>
        </button>
        <button aria-label="Page Break Preview" className="flex w-[60px] justify-center">
            <svg width="20" height="20" viewBox="0 0 20 20" fill="none" stroke="#666" strokeWidth="1.2"><path d="M1 1h18v18H1zM1 12h12V1M7 1v11" /></svg>
        </button>
        <button aria-label="Zoom Out" className="ml-2">
            <svg width="12" height="12" viewBox="0 0 12 12" stroke="#444" strokeWidth="1.3"><path d="M0 6h12" /></svg>
        </button>
        <div className="relative ml-2 flex h-full w-[148px] items-center">
            <span className="absolute left-[73px] top-3 h-[9px] w-[2px] bg-[#333]" />
            <input
                type="range"
                aria-label="Zoom"
                defaultValue={42}
                className="relative h-[17px] w-full appearance-none bg-[linear-gradient(#333,#333)] bg-[length:100%_2px] bg-center bg-no-repeat [&::-webkit-slider-thumb]:h-[17px] [&::-webkit-slider-thumb]:w-2 [&::-webkit-slider-thumb]:appearance-none [&::-webkit-slider-thumb]:bg-[#4a4446]"
            />
        </div>
        <button aria-label="Zoom In" className="ml-2">
            <svg width="12" height="12" viewBox="0 0 12 12" stroke="#444" strokeWidth="1.3"><path d="M0 6h12M6 0v12" /></svg>
        </button>
        <span className="ml-5 mr-[9px]">85%</span>
    </footer>
);

const Watermark = () => (
    <div className="pointer-events-none absolute bottom-4 left-[844px] z-40 flex w-[230px] flex-col items-center font-bold text-[#bdbdbd] opacity-40">
        <span dir="rtl" className="font-['DejaVu_Sans',sans-serif] text-[64px] leading-[68px]">مستقل</span>
        <span className="font-['Liberation_Sans',sans-serif] text-[37px] leading-[44px]">mostaql.com</span>
    </div>
);

const App = () => {
    return (
        <div className={"relative flex h-screen flex-col overflow-hidden bg-[#e6e6e6] " + UI}>
            <header className="relative bg-[#217346]">
                <Doodles />
                <TitleBar />
                <TabBar />
            </header>
            <Ribbon />
            <FormulaBar />
            <main className="flex min-h-0 flex-1">
                <VerticalScroll />
                <Sheet />
            </main>
            <SheetBar />
            <StatusBar />
            <Watermark />
        </div>
    );
};

export default App;
